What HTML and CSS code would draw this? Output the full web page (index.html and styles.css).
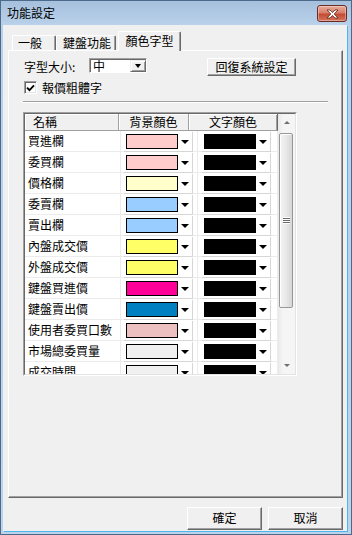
FILE: index.html
```html
<!DOCTYPE html>
<html>
<head>
<meta charset="utf-8">
<link rel="stylesheet" href="styles.css">
</head>
<body>
<div class="window">
  <div class="titlebar">
    <span class="title">功能設定</span>
    <div class="close"><svg width="13" height="10" viewBox="0 0 13 10"><path d="M1 1h3l2.5 2.6L9 1h3L8.2 5 12 9H9L6.5 6.4 4 9H1l3.8-4z" fill="#fff" stroke="#5a2418" stroke-width="0.8" stroke-linejoin="round"/></svg></div>
  </div>
  <div class="client">
    <div class="tabs">
      <div class="tab t1">一般</div>
      <div class="tab t2">鍵盤功能</div>
      <div class="tab t3 active">顏色字型</div>
    </div>
    <div class="panel">
      <div class="row-top">
        <span class="lbl">字型大小:</span>
        <div class="select"><span class="val">中</span><span class="dd"><i class="tri"></i></span></div>
        <div class="btn btn-reset">回復系統設定</div>
      </div>
      <div class="check"><span class="box"><svg width="9" height="8" viewBox="0 0 9 8"><path d="M1 3.6l2.5 2.6L8 1.3" fill="none" stroke="#000" stroke-width="1.8"/></svg></span><span>報價粗體字</span></div>
      <div class="sep"></div>
      <div class="grid">
        <div class="grid-in">
          <div class="grid-main">
            <div class="head">
              <div class="hcell first">名稱</div>
              <div class="hcell">背景顏色</div>
              <div class="hcell last">文字顏色</div>
            </div>
            <div class="rows">
              <div class="row"><div class="cell name">買進欄</div><div class="cell"><div class="combo"><span class="sw" style="background:#ffcccc"></span><span class="arr"><i class="tri"></i></span></div></div><div class="cell c3"><div class="combo"><span class="sw" style="background:#000"></span><span class="arr"><i class="tri"></i></span></div></div></div>
              <div class="row"><div class="cell name">委買欄</div><div class="cell"><div class="combo"><span class="sw" style="background:#ffcccc"></span><span class="arr"><i class="tri"></i></span></div></div><div class="cell c3"><div class="combo"><span class="sw" style="background:#000"></span><span class="arr"><i class="tri"></i></span></div></div></div>
              <div class="row"><div class="cell name">價格欄</div><div class="cell"><div class="combo"><span class="sw" style="background:#ffffcc"></span><span class="arr"><i class="tri"></i></span></div></div><div class="cell c3"><div class="combo"><span class="sw" style="background:#000"></span><span class="arr"><i class="tri"></i></span></div></div></div>
              <div class="row"><div class="cell name">委賣欄</div><div class="cell"><div class="combo"><span class="sw" style="background:#99ccff"></span><span class="arr"><i class="tri"></i></span></div></div><div class="cell c3"><div class="combo"><span class="sw" style="background:#000"></span><span class="arr"><i class="tri"></i></span></div></div></div>
              <div class="row"><div class="cell name">賣出欄</div><div class="cell"><div class="combo"><span class="sw" style="background:#99ccff"></span><span class="arr"><i class="tri"></i></span></div></div><div class="cell c3"><div class="combo"><span class="sw" style="background:#000"></span><span class="arr"><i class="tri"></i></span></div></div></div>
              <div class="row"><div class="cell name">內盤成交價</div><div class="cell"><div class="combo"><span class="sw" style="background:#ffff66"></span><span class="arr"><i class="tri"></i></span></div></div><div class="cell c3"><div class="combo"><span class="sw" style="background:#000"></span><span class="arr"><i class="tri"></i></span></div></div></div>
              <div class="row"><div class="cell name">外盤成交價</div><div class="cell"><div class="combo"><span class="sw" style="background:#ffff66"></span><span class="arr"><i class="tri"></i></span></div></div><div class="cell c3"><div class="combo"><span class="sw" style="background:#000"></span><span class="arr"><i class="tri"></i></span></div></div></div>
              <div class="row"><div class="cell name">鍵盤買進價</div><div class="cell"><div class="combo"><span class="sw" style="background:#ff0099"></span><span class="arr"><i class="tri"></i></span></div></div><div class="cell c3"><div class="combo"><span class="sw" style="background:#000"></span><span class="arr"><i class="tri"></i></span></div></div></div>
              <div class="row"><div class="cell name">鍵盤賣出價</div><div class="cell"><div class="combo"><span class="sw" style="background:#0080c0"></span><span class="arr"><i class="tri"></i></span></div></div><div class="cell c3"><div class="combo"><span class="sw" style="background:#000"></span><span class="arr"><i class="tri"></i></span></div></div></div>
              <div class="row"><div class="cell name">使用者委買口數</div><div class="cell"><div class="combo"><span class="sw" style="background:#ecc0c0"></span><span class="arr"><i class="tri"></i></span></div></div><div class="cell c3"><div class="combo"><span class="sw" style="background:#000"></span><span class="arr"><i class="tri"></i></span></div></div></div>
              <div class="row"><div class="cell name">市場總委買量</div><div class="cell"><div class="combo"><span class="sw" style="background:#f0f0f0"></span><span class="arr"><i class="tri"></i></span></div></div><div class="cell c3"><div class="combo"><span class="sw" style="background:#000"></span><span class="arr"><i class="tri"></i></span></div></div></div>
              <div class="row"><div class="cell name">成交時間</div><div class="cell"><div class="combo"><span class="sw" style="background:#f0f0f0"></span><span class="arr"><i class="tri"></i></span></div></div><div class="cell c3"><div class="combo"><span class="sw" style="background:#000"></span><span class="arr"><i class="tri"></i></span></div></div></div>
            </div>
          </div>
          <div class="scrollbar">
            <div class="sb-btn"><i class="up"></i></div>
            <div class="sb-track"><div class="thumb"><span class="grip"></span></div></div>
            <div class="sb-btn"><i class="down"></i></div>
          </div>
        </div>
      </div>
    </div>
    <div class="footer">
      <div class="btn btn-foot">確定</div>
      <div class="btn btn-foot">取消</div>
    </div>
  </div>
</div>
</body>
</html>
```
FILE: styles.css
```css
* { box-sizing: border-box; }
html, body { margin: 0; padding: 0; }
body {
  width: 352px; height: 535px; overflow: hidden;
  font-family: "Noto Sans CJK TC", "Noto Sans CJK SC", sans-serif;
  font-size: 12px; color: #000; background: #fff;
}
.window {
  width: 352px; height: 535px;
  display: flex; flex-direction: column;
  border: 1px solid #4b6a8c;
  background: linear-gradient(#a6c0dd, #b9d1ea 24px, #bcd3ec);
}
.titlebar {
  height: 24px; flex: none;
  display: flex; align-items: flex-start; justify-content: space-between;
  padding: 0 4px 0 6px;
}
.title { line-height: 24px; }
.close {
  margin-top: 4px; width: 30px; height: 17px;
  border: 1px solid #6b2b21; border-radius: 3px;
  background: linear-gradient(#e8ab9a, #d7806b 45%, #c44b33 55%, #d4735c);
  box-shadow: inset 0 0 0 1px rgba(255,255,255,0.35);
  display: flex; align-items: center; justify-content: center;
}
.client {
  flex: 1; margin: 0 4px 3px 2px;
  background: #f0f0f0;
  display: flex; flex-direction: column;
  padding: 6px 4px 1px 5px;
  box-shadow: 1px 1px 0 #4fb4ea;
}
.tabs {
  height: 19px; flex: none;
  display: flex; align-items: flex-end;
  padding-left: 4px;
}
.tab {
  height: 15px; line-height: 14px; text-align: center;
  background: #f0f0f0;
  border-top: 1px solid #fff; border-left: 1px solid #fff;
  border-right: 1px solid #696969;
  border-radius: 2px 2px 0 0;
  box-shadow: inset -1px 0 0 #a0a0a0;
}
.t1 { width: 44px; padding-right: 8px; }
.t2 { width: 60px; padding-left: 2px; }
.t3 { width: 63px; margin-left: 2px; }
.tab.active {
  height: 20px; margin-bottom: -1px; line-height: 17px;
  position: relative; z-index: 1;
}
.panel {
  height: 448px; flex: none;
  border: 1px solid; border-color: #fff #696969 #696969 #fff;
  box-shadow: inset -1px -1px 0 #a0a0a0;
  padding: 7px 0 0 15px;
}
.row-top { display: flex; align-items: flex-start; height: 18px; }
.lbl { width: 65px; line-height: 16px; padding-top: 1px; }
.select {
  width: 58px; height: 15px; background: #fff;
  border: 1px solid; border-color: #a0a0a0 #fff #fff #a0a0a0;
  box-shadow: inset 1px 1px 0 #696969;
  padding: 1px 0 0 1px;
  display: flex;
}
.select .val { flex: 1; line-height: 12px; padding-left: 2px; }
.select .dd {
  width: 16px; height: 12px;
  background: #f0f0f0;
  border: 1px solid; border-color: #f0f0f0 #696969 #696969 #f0f0f0;
  box-shadow: inset 1px 1px 0 #fff, inset -1px -1px 0 #a0a0a0;
  display: flex; align-items: center; justify-content: center;
}
.tri {
  display: block; width: 0; height: 0;
  border-left: 4px solid transparent; border-right: 4px solid transparent;
  border-top: 4px solid #000;
}
.select .tri { border-left-width: 3.5px; border-right-width: 3.5px; }
.btn {
  background: #f0f0f0;
  border: 1px solid; border-color: #fff #696969 #696969 #fff;
  box-shadow: inset -1px -1px 0 #a0a0a0;
  text-align: center;
}
.btn-reset { margin-left: 60px; width: 89px; height: 18px; line-height: 15px; }
.check { display: flex; align-items: center; height: 13px; margin-top: 5px; gap: 5px; }
.box {
  width: 13px; height: 13px; background: #fff;
  border: 1px solid; border-color: #a0a0a0 #fff #fff #a0a0a0;
  box-shadow: inset 1px 1px 0 #696969, inset -1px -1px 0 #e3e3e3;
  display: flex; align-items: center; justify-content: center;
}
.check span:last-child { line-height: 13px; }
.sep {
  margin-top: 7px; margin-left: -1px; width: 305px; height: 2px;
  border-top: 1px solid #a0a0a0; border-bottom: 1px solid #fff;
}
.grid {
  margin-top: 9px; margin-left: -1px;
  width: 274px; height: 264px;
  border: 1px solid; border-color: #a0a0a0 #fff #fff #a0a0a0;
}
.grid-in {
  height: 100%;
  border: 1px solid; border-color: #696969 #e3e3e3 #e3e3e3 #696969;
  display: flex;
}
.grid-main { width: 253px; display: flex; flex-direction: column; overflow: hidden; background: #fff; }
.head { display: grid; grid-template-columns: 94px 70px 89px; height: 17px; flex: none; }
.hcell {
  background: #f0f0f0; line-height: 16px; text-align: center;
  border-right: 1px solid #a0a0a0; border-bottom: 1px solid #a0a0a0;
  box-shadow: inset 1px 1px 0 #fff;
}
.hcell.first { text-align: left; padding-left: 8px; }
.hcell.last { border-right-color: #696969; box-shadow: inset 1px 1px 0 #fff, inset -1px 0 0 #a0a0a0; }
.rows { flex: 1; overflow: hidden; }
.row {
  display: grid; grid-template-columns: 96px 77px 80px;
  height: 21px; border-bottom: 1px solid #ececec;
}
.cell { border-right: 1px solid #ececec; }
.name { padding-left: 3px; line-height: 20px; white-space: nowrap; }
.combo {
  margin: 1px 0 0 3px; width: 69px; height: 20px;
  border-right: 1px solid #d6d6d6; border-bottom: 1px solid #d6d6d6;
  padding: 2px 0 0 2px;
  display: flex; align-items: flex-start;
}
.c3 .combo { margin-left: 4px; }
.sw { width: 52px; height: 15px; border: 1px solid #000; flex: none; }
.arr { flex: 1; height: 15px; display: flex; align-items: center; justify-content: center; }
.scrollbar {
  width: 17px; display: flex; flex-direction: column;
  background: linear-gradient(90deg, #e9e9e9, #f5f5f5 30%, #f5f5f5);
}
.sb-btn { height: 17px; flex: none; display: flex; align-items: center; justify-content: center; }
.up { display: block; width: 0; height: 0; border-left: 3px solid transparent; border-right: 3px solid transparent; border-bottom: 3px solid #6f6f6f; }
.down { display: block; width: 0; height: 0; border-left: 3px solid transparent; border-right: 3px solid transparent; border-top: 3px solid #6f6f6f; }
.sb-track { flex: 1; padding: 2px 2px 0 1px; }
.thumb {
  height: 175px; border: 1px solid #979797; border-radius: 2px;
  background: linear-gradient(90deg, #f4f4f4, #e8e8e8 50%, #d6d6d6);
  box-shadow: inset 1px 1px 0 #fff;
  display: flex; align-items: center; justify-content: center;
}
.grip {
  display: block; width: 7px; height: 7px;
  background: repeating-linear-gradient(#fff 0 1px, #6a6a6a 1px 2px);
}
.footer { margin-top: 9px; display: flex; justify-content: flex-end; gap: 6px; height: 23px; flex: none; }
.btn-foot { width: 75px; height: 23px; line-height: 20px; }
```
